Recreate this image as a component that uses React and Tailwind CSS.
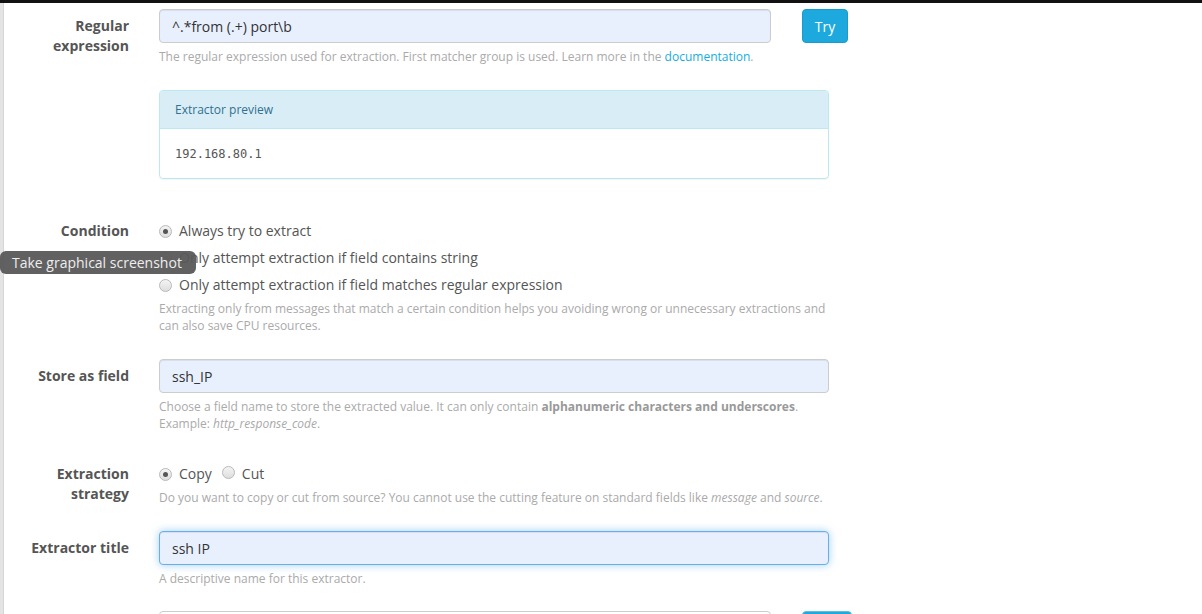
import React from 'react'

function Radio({ checked }) {
  return (
    <span className="inline-flex items-center justify-center w-[13px] h-[13px] rounded-full border border-[#b9b9b9] bg-gradient-to-b from-[#f4f4f4] to-[#dedede] shrink-0">
      {checked && <span className="w-[5px] h-[5px] rounded-full bg-[#555]" />}
    </span>
  )
}

function Label({ children }) {
  return (
    <div className="w-[113px] shrink-0 pt-[7px] text-right text-[14px] leading-[20px] font-bold text-[#555]">
      {children}
    </div>
  )
}

function Help({ children }) {
  return <p className="mt-[5px] text-[12px] leading-[17px] text-[#aaa]">{children}</p>
}

function Input({ value, focused, className = '' }) {
  return (
    <div
      className={
        'h-[34px] rounded-[4px] bg-[#e8f0fe] px-[12px] flex items-center text-[14px] text-[#333] shrink-0 ' +
        (focused
          ? 'border border-[#66afe9] shadow-[inset_0_1px_1px_rgba(0,0,0,0.075),0_0_8px_rgba(102,175,233,0.6)] '
          : 'border border-[#ccc] shadow-[inset_0_1px_1px_rgba(0,0,0,0.075)] ') +
        className
      }
    >
      {value}
    </div>
  )
}

export default function App() {
  return (
    <div
      className="relative w-[1202px] h-[614px] overflow-hidden bg-white flex"
      style={{ fontFamily: '"Open Sans", "Noto Sans", sans-serif' }}
    >
      {/* window frame edges */}
      <div className="absolute top-0 left-0 right-0 h-[3px] bg-[#111]" />
      <div className="w-[4px] shrink-0 bg-[#e4e4e4] border-r border-[#d6d6d6]" />

      <div className="pl-[12px] pt-[9px] flex flex-col">
        {/* Regular expression */}
        <div className="flex gap-[30px]">
          <Label>
            Regular
            <br />
            expression
          </Label>
          <div className="w-[670px]">
            <div className="flex">
              <Input value="^.*from (.+) port\b" className="w-[612px]" />
              <button className="ml-[31px] w-[46px] h-[34px] shrink-0 rounded-[4px] bg-[#1ea9de] border border-[#1a9bcc] text-white text-[14px]">
                Try
              </button>
            </div>
            <Help>
              The regular expression used for extraction. First matcher group is used. Learn more in the{' '}
              <a className="text-[#16ace3]">documentation</a>.
            </Help>

            <div className="mt-[25px] rounded-[4px] border border-[#bce8f1] shadow-[0_1px_1px_rgba(0,0,0,0.05)]">
              <div className="h-[38px] px-[15px] flex items-center bg-[#d9edf7] border-b border-[#bce8f1] rounded-t-[3px] text-[12px] text-[#31708f]">
                Extractor preview
              </div>
              <div className="h-[49px] px-[15px] flex items-center text-[12px] text-[#555] font-['DejaVu_Sans_Mono',monospace]">
                192.168.80.1
              </div>
            </div>
          </div>
        </div>

        {/* Condition */}
        <div className="flex gap-[30px] mt-[35px]">
          <Label>Condition</Label>
          <div className="w-[670px] pt-[7px]">
            <div className="flex flex-col gap-[7px] text-[14px] leading-[20px] text-[#555]">
              <label className="flex items-center gap-[7px]">
                <Radio checked />
                Always try to extract
              </label>
              <label className="flex items-center gap-[7px]">
                <Radio />
                Only attempt extraction if field contains string
              </label>
              <label className="flex items-center gap-[7px]">
                <Radio />
                Only attempt extraction if field matches regular expression
              </label>
            </div>
            <Help>
              Extracting only from messages that match a certain condition helps you avoiding wrong or unnecessary extractions and
              can also save CPU resources.
            </Help>
          </div>
        </div>

        {/* Store as field */}
        <div className="flex gap-[30px] mt-[25px]">
          <Label>Store as field</Label>
          <div className="w-[670px]">
            <Input value="ssh_IP" />
            <Help>
              Choose a field name to store the extracted value. It can only contain{' '}
              <b className="font-bold text-[#999]">alphanumeric characters and underscores</b>.
              <br />
              Example: <i>http_response_code</i>.
            </Help>
          </div>
        </div>

        {/* Extraction strategy */}
        <div className="flex gap-[30px] mt-[25px]">
          <Label>
            Extraction
            <br />
            strategy
          </Label>
          <div className="w-[670px] pt-[7px]">
            <div className="flex items-center text-[14px] leading-[20px] text-[#555]">
              <Radio checked />
              <span className="ml-[7px]">Copy</span>
              <span className="ml-[10px]">
                <Radio />
              </span>
              <span className="ml-[7px]">Cut</span>
            </div>
            <Help>
              Do you want to copy or cut from source? You cannot use the cutting feature on standard fields like{' '}
              <i>message</i> and <i>source</i>.
            </Help>
          </div>
        </div>

        {/* Extractor title */}
        <div className="flex gap-[30px] mt-[25px]">
          <Label>Extractor title</Label>
          <div className="w-[670px]">
            <Input value="ssh IP" focused />
            <Help>A descriptive name for this extractor.</Help>
          </div>
        </div>

        {/* next row, cut off */}
        <div className="flex gap-[30px] mt-[24px]">
          <div className="w-[113px] shrink-0" />
          <div className="w-[670px] flex">
            <div className="w-[612px] h-[34px] shrink-0 rounded-[4px] border border-[#ccc]" />
            <div className="ml-[31px] w-[50px] h-[34px] shrink-0 rounded-[4px] bg-[#1ea9de] border border-[#5bc0de]" />
          </div>
        </div>
      </div>

      {/* system tooltip overlay */}
      <div className="absolute left-0 top-[251px] h-[23px] w-[196px] rounded-[6px] bg-[#595959]/95 text-[#eee] text-[14px] leading-[23px] pl-[12px] whitespace-nowrap">
        Take graphical screenshot
      </div>
    </div>
  )
}
